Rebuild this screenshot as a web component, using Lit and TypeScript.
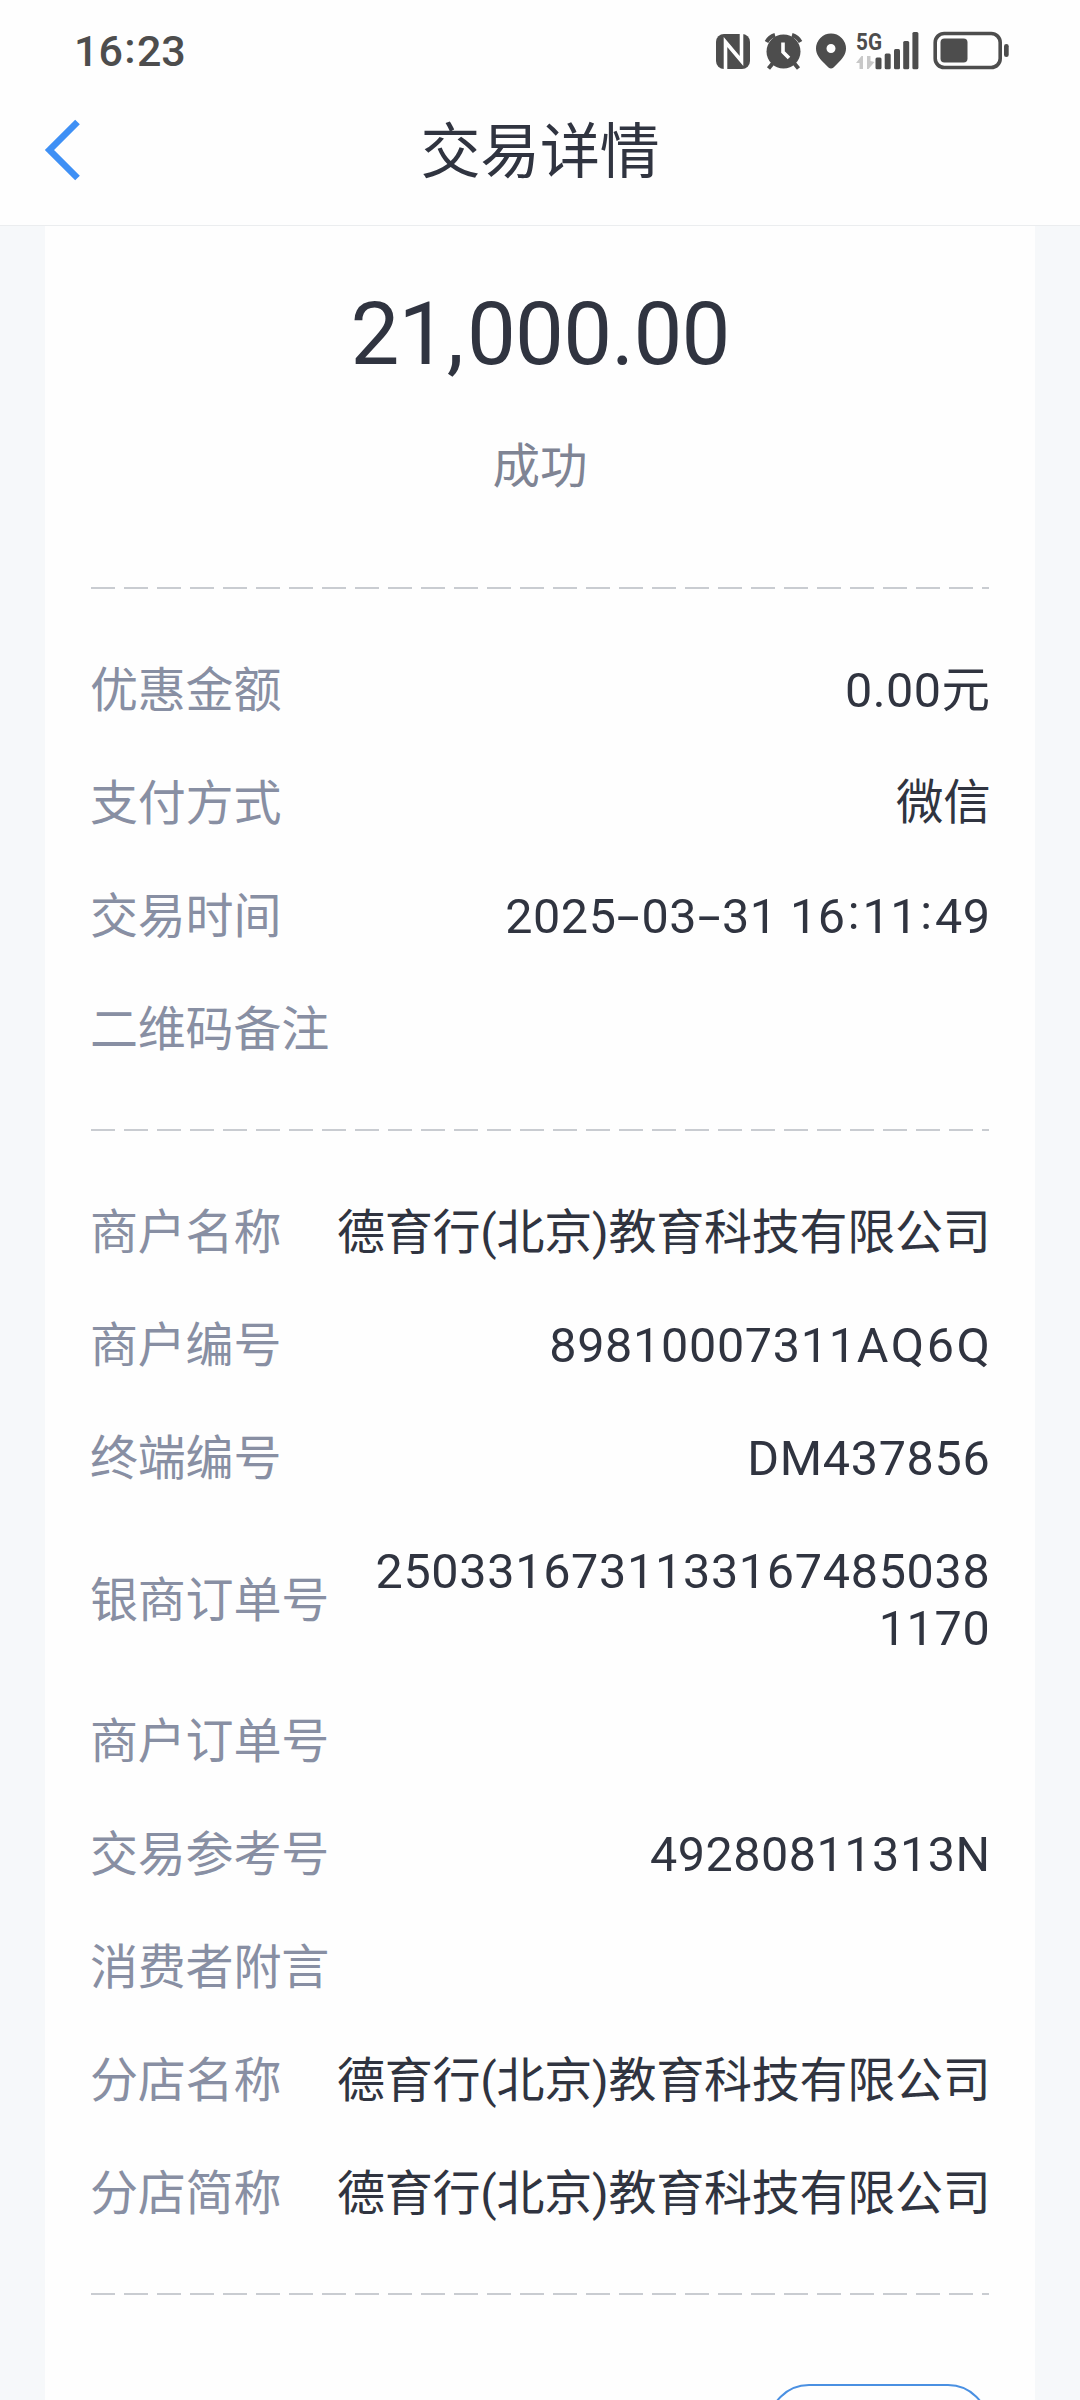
import { LitElement, html, css, svg, nothing } from "lit";
import { customElement, property } from "lit/decorators.js";

interface Row {
  label: string;
  value?: string;
  kind?: string;
}

const PAYMENT: Row[] = [
  { label: "优惠金额", value: "0.00元" },
  { label: "支付方式", value: "微信", kind: "method" },
  { label: "交易时间", value: "2025-03-31 16:11:49", kind: "time" },
  { label: "二维码备注" },
];

const COMPANY = "德育行(北京)教育科技有限公司";

const MERCHANT: Row[] = [
  { label: "商户名称", value: COMPANY, kind: "company" },
  { label: "商户编号", value: "89810007311AQ6Q", kind: "code" },
  { label: "终端编号", value: "DM437856", kind: "terminal" },
  { label: "银商订单号", value: "25033167311331674850381170", kind: "order" },
  { label: "商户订单号" },
  { label: "交易参考号", value: "49280811313N", kind: "refno" },
  { label: "消费者附言" },
  { label: "分店名称", value: COMPANY, kind: "company" },
  { label: "分店简称", value: COMPANY, kind: "company" },
];

@customElement("status-bar")
export class StatusBar extends LitElement {
  static styles = css`
    :host {
      display: flex;
      justify-content: space-between;
      height: 100px;
      box-sizing: border-box;
      padding: 26px 70px 0 74px;
      color: #4d4d4d;
    }
    .time {
      display: flex;
      font: 500 43px/50px Roboto, "Noto Sans CJK SC", sans-serif;
    }
    .colon {
      width: 14px;
      text-align: center;
      transform: translateY(-3px);
    }
    .icons {
      width: 300px;
      height: 50px;
      fill: #4d4d4d;
    }
    .net {
      font: 700 24px Roboto, sans-serif;
    }
  `;

  render() {
    return html`
      <div class="time"><span>16</span><span class="colon">:</span><span>23</span></div>
      <svg class="icons" viewBox="710 26 300 50">
        <rect x="716" y="34" width="34" height="35" rx="8"></rect>
        <path d="M725.500 70V42L741.500 61V33" fill="none" stroke="#fff" stroke-width="3.600"></path>
        <g>
          <circle cx="783.500" cy="51.500" r="17"></circle>
          <path
            d="M766.500 42A14 14 0 0 1 775 35M792 35A14 14 0 0 1 800.500 42M773 63L768.500 68.500M794 63L798.500 68.500"
            fill="none" stroke="#4d4d4d" stroke-width="4"
          ></path>
          <path d="M783 42.500V52L789 58" fill="none" stroke="#fff" stroke-width="3.600"></path>
        </g>
        <path
          fill-rule="evenodd"
          d="M831 33.500a15 15 0 0 1 15 15c0 6-4 10.500-8 14.500l-4.500 4.500q-2.500 2.200-5 0L824 63c-4-4-8-8.500-8-14.500a15 15 0 0 1 15-15zm0 10.500a4.500 4.500 0 1 0 0 9 4.500 4.500 0 0 0 0-9z"
        ></path>
        <text class="net" x="856" y="50" textLength="26" lengthAdjust="spacingAndGlyphs">5G</text>
        <path d="M856 63L861.500 56H863V69H859.500V63zM867 56H870.500V61L874.500 62 868.500 69H867z" fill="#c8c8c8"></path>
        ${[
          [875.5, 57.5],
          [884.7, 53.5],
          [894, 49],
          [903.2, 41],
          [912.4, 32],
        ].map(([x, y]) => svg`<rect x=${x} y=${y} width="6" height=${69.3 - y} rx="1.500"></rect>`)}
        <rect x="935.200" y="33.500" width="65" height="34" rx="9" fill="none" stroke="#4d4d4d" stroke-width="3.600"></rect>
        <rect x="940.500" y="38.500" width="27" height="24" rx="4"></rect>
        <rect x="1004" y="44" width="4.700" height="13" rx="2.300"></rect>
      </svg>
    `;
  }
}

@customElement("detail-list")
export class DetailList extends LitElement {
  @property({ attribute: false }) rows: Row[] = [];

  static styles = css`
    :host {
      display: flex;
      flex-direction: column;
      gap: 56px;
      padding: 73px 0 71px;
    }
    .row {
      display: flex;
      align-items: center;
      justify-content: space-between;
      min-height: 57px;
      font-size: 48px;
      line-height: 57px;
    }
    .label {
      flex: none;
      margin-left: -1px;
      color: #888fa3;
      letter-spacing: -0.2px;
    }
    .value {
      margin-right: -1.5px;
      color: #303440;
      font-size: 48.5px;
      text-align: right;
      letter-spacing: 0.5px;
    }
    .company,
    .method {
      font-size: 48px;
      letter-spacing: -0.25px;
    }
    .method {
      font-size: 47.5px;
    }
    .code,
    .order,
    .terminal {
      letter-spacing: 0.7px;
    }
    .wide {
      letter-spacing: 2.6px;
      margin-right: -2px;
    }
    .order {
      width: 630px;
      word-break: break-all;
    }
    .hyphen,
    .colon {
      display: inline-block;
      width: 25px;
      text-align: center;
      transform: scaleX(1.7);
    }
    .colon {
      width: 17px;
      transform: translateY(-4px);
    }
  `;

  private format(r: Row) {
    const text = r.value ?? "";
    if (r.kind === "time") {
      return text
        .split(/([-:])/)
        .map((part) =>
          part === "-"
            ? html`<span class="hyphen">-</span>`
            : part === ":"
              ? html`<span class="colon">:</span>`
              : part,
        );
    }
    if (r.kind === "code") {
      return html`${text.slice(0, -4)}<span class="wide">${text.slice(-4)}</span>`;
    }
    return text;
  }

  render() {
    return this.rows.map(
      (r) => html`<div class="row">
        <span class="label">${r.label}</span>
        ${r.value ? html`<span class="value ${r.kind ?? ""}">${this.format(r)}</span>` : nothing}
      </div>`,
    );
  }
}

@customElement("app-root")
export class AppRoot extends LitElement {
  static styles = css`
    :host {
      display: flex;
      flex-direction: column;
      width: 1080px;
      height: 2400px;
      overflow: hidden;
      background: #f6f8fa;
      font-family: Roboto, "Noto Sans CJK SC", sans-serif;
    }
    .top {
      flex: none;
      height: 226px;
      box-sizing: border-box;
      background: #fefefe;
      border-bottom: 1px solid #ebedef;
    }
    .nav {
      display: grid;
      grid-template-columns: 120px 1fr 120px;
      align-items: center;
      height: 100px;
    }
    .back {
      width: 40px;
      height: 64px;
      margin-left: 43px;
    }
    .title {
      margin: 0;
      padding-top: 6px;
      color: #303440;
      font-size: 60px;
      font-weight: 400;
      line-height: 94px;
      text-align: center;
      letter-spacing: -0.3px;
    }
    .card {
      flex: 1;
      min-height: 0;
      margin: 0 45px;
      padding: 0 46px;
      background: #fefefe;
      overflow: hidden;
    }
    .summary {
      display: flex;
      flex-direction: column;
      align-items: center;
      height: 361px;
    }
    .amount {
      margin-top: 58px;
      color: #303440;
      font-size: 87px;
      line-height: 100px;
      letter-spacing: -0.8px;
    }
    .comma {
      margin-right: 4px;
    }
    .state {
      margin-top: 55px;
      color: #7f8494;
      font-size: 47.5px;
      line-height: 57px;
    }
    .dash {
      height: 2px;
      background: repeating-linear-gradient(90deg, #c9ccd1 0 24px, transparent 24px 33px);
    }
    .actions {
      display: flex;
      justify-content: flex-end;
      padding-top: 89px;
    }
    .button {
      width: 221px;
      height: 82px;
      box-sizing: border-box;
      border: 2px solid #4a90e2;
      border-radius: 41px;
      background: transparent;
    }
  `;

  render() {
    return html`
      <header class="top">
        <status-bar></status-bar>
        <div class="nav">
          <svg class="back" viewBox="0 0 40 64">
            <path d="M34.500 4L6.500 32L34.500 60" fill="none" stroke="#3f90f5" stroke-width="6.600"></path>
          </svg>
          <h1 class="title">交易详情</h1>
        </div>
      </header>
      <main class="card">
        <div class="summary">
          <div class="amount">21<span class="comma">,</span>000.00</div>
          <div class="state">成功</div>
        </div>
        <div class="dash"></div>
        <detail-list .rows=${PAYMENT}></detail-list>
        <div class="dash"></div>
        <detail-list .rows=${MERCHANT}></detail-list>
        <div class="dash"></div>
        <div class="actions"><button class="button"></button></div>
      </main>
    `;
  }
}
